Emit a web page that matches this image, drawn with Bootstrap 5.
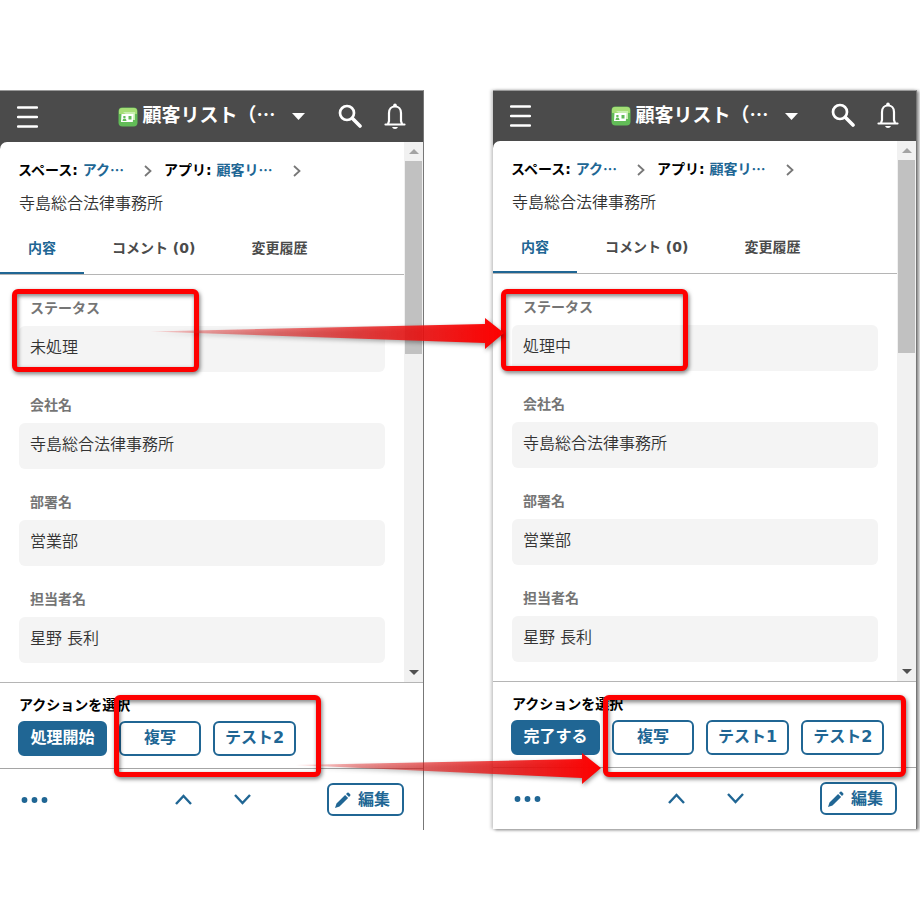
<!DOCTYPE html>
<html lang="ja">
<head>
<meta charset="utf-8">
<meta name="viewport" content="width=device-width, initial-scale=1">
<title>顧客リスト</title>
<link href="https://cdn.jsdelivr.net/npm/bootstrap@5.3.0/dist/css/bootstrap.min.css" rel="stylesheet">
<style>
  :root { --ink: #206694; --mark: #fe0000; }
  body { font-family: "DejaVu Sans", "Noto Sans CJK JP", sans-serif; font-size: 16px; line-height: 24px; color: #333; background: #fff; }
  a { color: var(--ink); text-decoration: none; font-family: "Noto Sans CJK JP", sans-serif; }
  .compare { display: grid; grid-template-columns: 1fr 1fr; column-gap: 69px; padding: 90px 3px 90px 0; align-items: start; }
  .phone { background: #4b4b4b; border-top: 1px solid #999; border-right: 1px solid #777; }
  .phone-raised { box-shadow: 2px 1px 3px #888, -2px 0 3px #ccc; }
  .tri-row { display: grid; grid-template-columns: 1fr auto 1fr; align-items: center; }
  .app-head { height: 51px; padding: 0 17px; color: #fff; }
  .phone-raised .app-head { height: 50px; }
  .app-title { font-family: "Noto Sans CJK JP", sans-serif; font-size: 19px; font-weight: 700; line-height: 28px; margin: 0 16px 5px 4px; }
  .head-tools { gap: 22px; padding-bottom: 2px; }
  .bare { background: none; border: 0; padding: 0; color: inherit; display: flex; }
  .bare svg { display: block; }
  .sheet { background: #fff; border-radius: 7px 0 0 0; }
  .crumbs { padding: 13px 18px 0; font-size: 14px; line-height: 28px; font-weight: 700; color: #000; }
  .crumbs svg { margin: 0 12px 0 20px; }
  .rec-name { padding: 3px 19px 3px; line-height: 34px; margin: 0; font-size: 16px; font-weight: 350; }
  .rec-tabs { border-bottom: 1px solid #b5b5b5; }
  .rec-tabs button { background: none; border: 0; border-bottom: 2px solid transparent; padding: 0 28px; height: 50px; font-size: 14px; font-weight: 700; color: #4b4b4b; }
  .rec-tabs button.current { color: var(--ink); border-color: var(--ink); }
  .fields { padding: 23px 19px 19px; display: grid; row-gap: 23px; margin: 0; }
  .fields dt { font-size: 14px; line-height: 20px; padding-left: 11px; margin-bottom: 8px; color: #757575; }
  .fields dd { background: #f4f4f4; border-radius: 6px; padding: 10px 11px 12px; margin: 0; font-weight: 350; }
  .track { width: 19px; background: #f1f1f1; border: 0 solid #f1f1f1; border-width: 0 1px; }
  .track div { height: 193px; background: #c1c1c1; }
  .track span { height: 19px; }
  .act-bar { border-top: 1px solid #b5b5b5; background: #fff; padding: 10px 18px 12px; }
  .act-bar h2 { font-size: 14px; line-height: 24px; font-weight: 700; color: #000; margin: 0 0 4px; padding-left: 1px; }
  .act { height: 35px; min-width: 82px; padding: 0 10px 2px; border: 2px solid var(--ink); border-radius: 6px; color: var(--ink); font-weight: 700; line-height: 24px; }
  .act.btn-fill { background: var(--ink); color: #fff; min-width: 89px; }
  .act:hover { color: var(--ink); }
  .foot { border-top: 1px solid #a5a5a5; background: #fff; color: var(--ink); padding: 14px 19px 14px 21px; }
  .steps { gap: 42px; }
  .edit { height: 33px; min-width: 77px; padding: 0 12px 0 6px; }
  .edit svg { margin-right: 7px; }
  .frame { position: absolute; border: 5px solid var(--mark); border-radius: 6px; pointer-events: none; z-index: 2; filter: drop-shadow(1px 2px 2px #0008); }
  .frame-status { inset: -9px auto 0 -7px; width: 187px; }
  .frame-acts { inset: -26px -25px -21px -5px; }
  .phone-raised .frame-status { inset: -8px auto 0 -11px; }
  .phone-raised .frame-acts { inset: -25px -22px -22px -9px; }
  .arrow { position: absolute; z-index: 3; pointer-events: none; filter: drop-shadow(1px 2px 2px #0006); }
  .arrow-a { left: 150px; top: 315px; }
  .arrow-b { left: 295px; top: 750px; }
</style>
<script src="https://cdn.jsdelivr.net/npm/bootstrap@5.3.0/dist/js/bootstrap.bundle.min.js"></script>
</head>
<body>
<svg class="d-none" aria-hidden="true">
  <symbol id="menu" viewBox="0 0 21 22"><path d="M1 1.500h19M1 11h19M1 20.500h19" stroke="#fff" stroke-width="2.300" stroke-linecap="round"/></symbol>
  <symbol id="app" viewBox="0 0 20 20"><rect x=".5" y=".5" width="19" height="19" rx="4" fill="#62bc58"/><path d="M1 7V4q0-3 3-3h12q3 0 3 3v3z" fill="#a5de76"/><path d="M5 5h12v8h-2" fill="#c9eeb0"/><path d="M3.500 7h12l-.7 8H3z" fill="#fff"/><path d="M4.500 14c.2-2 1-2.500 2-2.500s1.800.5 2 2.500zM5.300 9h2.200v2H5.300zM10.500 9h3v3.500h-3z" fill="#62bc58"/></symbol>
  <symbol id="search" viewBox="0 0 24 24"><circle cx="9" cy="9" r="7" fill="none" stroke="#fff" stroke-width="2.700"/><path d="M14.500 14.500L22 22" stroke="#fff" stroke-width="3.600" stroke-linecap="round"/></symbol>
  <symbol id="bell" viewBox="0 0 22 26"><path d="M1.500 21.500h19M4 21l1-3V10c0-4 2.500-6.500 6-6.500s6 2.500 6 6.500v8l1 3" fill="none" stroke="#fff" stroke-width="2.200" stroke-linecap="round"/><circle cx="11" cy="2.200" r="1.800" fill="#fff"/><path d="M8 24h6q-.7 2-3 2t-3-2z" fill="#fff"/></symbol>
  <symbol id="next" viewBox="0 0 8 12"><path d="M1 1l5.500 5L1 11" fill="none" stroke="#777" stroke-width="1.800"/></symbol>
  <symbol id="dots" viewBox="0 0 28 6"><circle cx="3.500" cy="3" r="2.900"/><circle cx="13.500" cy="3" r="2.900"/><circle cx="23.500" cy="3" r="2.900"/></symbol>
  <symbol id="up" viewBox="0 0 17 11"><path d="M1 10l7.500-8L16 10" fill="none" stroke="#206694" stroke-width="2.400"/></symbol>
  <symbol id="down" viewBox="0 0 17 11"><path d="M1 1l7.500 8L16 1" fill="none" stroke="#206694" stroke-width="2.400"/></symbol>
  <symbol id="pen" viewBox="0 0 16 16"><path d="M0 16l1.500-4.500 8.600-8.600 3 3-8.600 8.600zM11 2l1.300-1.200q.7-.6 1.400 0l1.500 1.500q.6.700 0 1.400L14 5z" fill="#206694"/></symbol>
</svg>

<main class="compare position-relative">
  <section class="phone">
    <header class="app-head tri-row">
      <button class="bare" aria-label="メニュー"><svg width="21" height="22"><use href="#menu"/></svg></button>
      <div class="d-flex align-items-center">
        <svg width="20" height="20"><use href="#app"/></svg>
        <h1 class="app-title">顧客リスト（…</h1>
        <svg width="13" height="7"><path d="M0 0h13L6.500 7z" fill="#fff"/></svg>
      </div>
      <div class="head-tools d-flex justify-content-end align-items-center">
        <button class="bare" aria-label="検索"><svg width="24" height="24"><use href="#search"/></svg></button>
        <button class="bare" aria-label="通知"><svg width="22" height="26"><use href="#bell"/></svg></button>
      </div>
    </header>
    <div class="sheet d-flex">
      <div class="flex-fill">
        <nav class="crumbs">スペース: <a href="#">アク…</a><svg width="8" height="12"><use href="#next"/></svg>アプリ: <a href="#">顧客リ…</a><svg width="8" height="12"><use href="#next"/></svg></nav>
        <p class="rec-name">寺島総合法律事務所</p>
        <div class="rec-tabs d-flex"><button class="current">内容</button><button>コメント (0)</button><button>変更履歴</button></div>
        <dl class="fields">
          <div class="position-relative"><dt>ステータス</dt><dd>未処理</dd><span class="frame frame-status"></span></div>
          <div><dt>会社名</dt><dd>寺島総合法律事務所</dd></div>
          <div><dt>部署名</dt><dd>営業部</dd></div>
          <div><dt>担当者名</dt><dd>星野 長利</dd></div>
        </dl>
      </div>
      <div class="track d-flex flex-column" aria-hidden="true">
        <span class="d-flex justify-content-center align-items-center"><svg width="10" height="5"><path d="M0 5h10L5 0z" fill="#a3a3a3"/></svg></span>
        <div></div>
        <span class="mt-auto d-flex justify-content-center align-items-center"><svg width="10" height="5"><path d="M0 0h10L5 5z" fill="#505050"/></svg></span>
      </div>
    </div>
    <div class="act-bar">
      <h2>アクションを選択</h2>
      <div class="d-flex">
        <button class="btn act btn-fill me-2">処理開始</button>
        <div class="position-relative d-flex gap-2 ms-1"><button class="btn act">複写</button><button class="btn act ms-1">テスト2</button><span class="frame frame-acts"></span></div>
      </div>
    </div>
    <footer class="foot tri-row">
      <button class="bare" aria-label="その他"><svg width="28" height="6" fill="#206694"><use href="#dots"/></svg></button>
      <div class="steps d-flex"><button class="bare" aria-label="前へ"><svg width="17" height="11"><use href="#up"/></svg></button><button class="bare" aria-label="次へ"><svg width="17" height="11"><use href="#down"/></svg></button></div>
      <div class="text-end"><button class="btn act edit"><svg width="16" height="16"><use href="#pen"/></svg>編集</button></div>
    </footer>
  </section>

  <section class="phone phone-raised">
    <header class="app-head tri-row">
      <button class="bare" aria-label="メニュー"><svg width="21" height="22"><use href="#menu"/></svg></button>
      <div class="d-flex align-items-center">
        <svg width="20" height="20"><use href="#app"/></svg>
        <h1 class="app-title">顧客リスト（…</h1>
        <svg width="13" height="7"><path d="M0 0h13L6.500 7z" fill="#fff"/></svg>
      </div>
      <div class="head-tools d-flex justify-content-end align-items-center">
        <button class="bare" aria-label="検索"><svg width="24" height="24"><use href="#search"/></svg></button>
        <button class="bare" aria-label="通知"><svg width="22" height="26"><use href="#bell"/></svg></button>
      </div>
    </header>
    <div class="sheet d-flex">
      <div class="flex-fill">
        <nav class="crumbs">スペース: <a href="#">アク…</a><svg width="8" height="12"><use href="#next"/></svg>アプリ: <a href="#">顧客リ…</a><svg width="8" height="12"><use href="#next"/></svg></nav>
        <p class="rec-name">寺島総合法律事務所</p>
        <div class="rec-tabs d-flex"><button class="current">内容</button><button>コメント (0)</button><button>変更履歴</button></div>
        <dl class="fields">
          <div class="position-relative"><dt>ステータス</dt><dd>処理中</dd><span class="frame frame-status"></span></div>
          <div><dt>会社名</dt><dd>寺島総合法律事務所</dd></div>
          <div><dt>部署名</dt><dd>営業部</dd></div>
          <div><dt>担当者名</dt><dd>星野 長利</dd></div>
        </dl>
      </div>
      <div class="track d-flex flex-column" aria-hidden="true">
        <span class="d-flex justify-content-center align-items-center"><svg width="10" height="5"><path d="M0 5h10L5 0z" fill="#a3a3a3"/></svg></span>
        <div></div>
        <span class="mt-auto d-flex justify-content-center align-items-center"><svg width="10" height="5"><path d="M0 0h10L5 5z" fill="#505050"/></svg></span>
      </div>
    </div>
    <div class="act-bar">
      <h2>アクションを選択</h2>
      <div class="d-flex">
        <button class="btn act btn-fill me-2">完了する</button>
        <div class="position-relative d-flex gap-2 ms-1"><button class="btn act">複写</button><button class="btn act ms-1">テスト1</button><button class="btn act ms-1">テスト2</button><span class="frame frame-acts"></span></div>
      </div>
    </div>
    <footer class="foot tri-row">
      <button class="bare" aria-label="その他"><svg width="28" height="6" fill="#206694"><use href="#dots"/></svg></button>
      <div class="steps d-flex"><button class="bare" aria-label="前へ"><svg width="17" height="11"><use href="#up"/></svg></button><button class="bare" aria-label="次へ"><svg width="17" height="11"><use href="#down"/></svg></button></div>
      <div class="text-end"><button class="btn act edit"><svg width="16" height="16"><use href="#pen"/></svg>編集</button></div>
    </footer>
  </section>

  <svg class="arrow arrow-a" width="355" height="36" viewBox="0 0 355 36">
    <defs><linearGradient id="fadeA"><stop stop-color="#e00" stop-opacity=".1"/><stop offset=".15" stop-color="#e02020" stop-opacity=".4"/><stop offset=".7" stop-color="#ec1515" stop-opacity=".85"/><stop offset="1" stop-color="#fe0000"/></linearGradient></defs>
    <path d="M0 16.500L335 9V3l19 15-19 16v-6z" fill="url(#fadeA)"/>
  </svg>
  <svg class="arrow arrow-b" width="308" height="36" viewBox="0 0 308 36">
    <defs><linearGradient id="fadeB"><stop stop-color="#e00" stop-opacity=".1"/><stop offset=".2" stop-color="#e02020" stop-opacity=".45"/><stop offset=".7" stop-color="#ec1515" stop-opacity=".85"/><stop offset="1" stop-color="#fe0000"/></linearGradient></defs>
    <path d="M0 15L287 9V3l19 15-19 16v-6z" fill="url(#fadeB)"/>
  </svg>
</main>
</body>
</html>
